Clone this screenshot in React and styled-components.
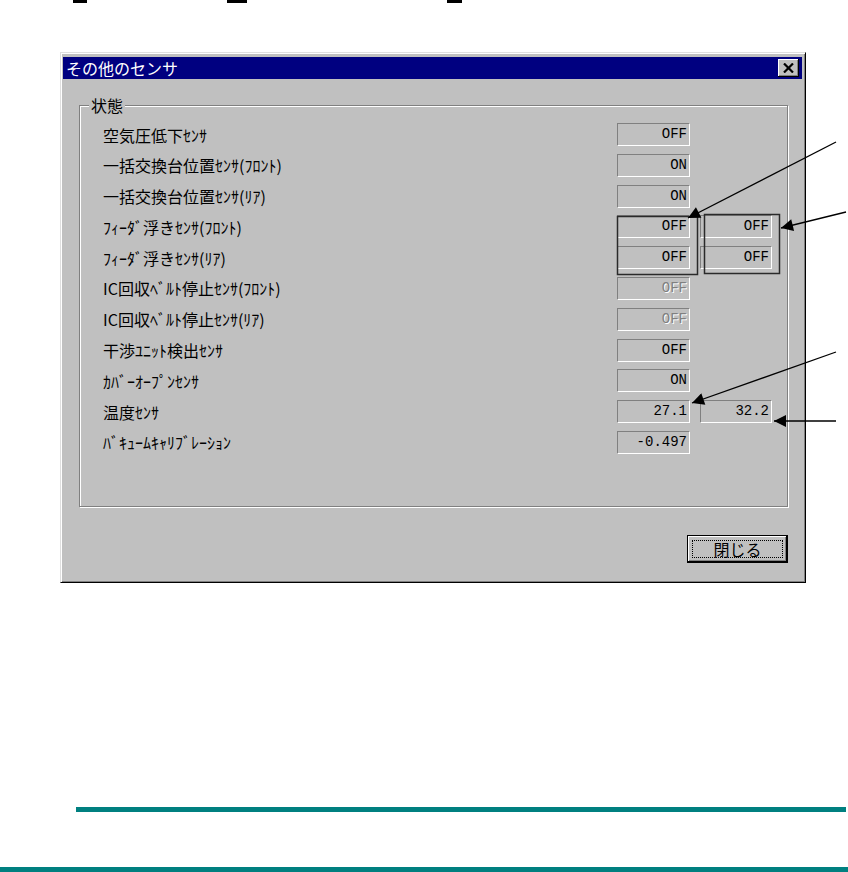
import React from "react";
import styled, { createGlobalStyle } from "styled-components";

const GlobalStyle = createGlobalStyle`
  html, body {
    margin: 0;
    padding: 0;
    background: #ffffff;
  }
  body {
    font-family: "Noto Sans CJK JP", "Noto Sans", sans-serif;
  }
`;

const Page = styled.div`
  position: relative;
  width: 848px;
  height: 872px;
  overflow: hidden;
  display: flex;
  flex-direction: column;
  background: #ffffff;
`;

const TopMarks = styled.div`
  display: flex;
  height: 3px;
`;

const Mark = styled.div`
  margin-left: ${(p) => p.$offset}px;
  width: ${(p) => p.$w}px;
  height: 3px;
  background: #000;
`;

const Dialog = styled.div`
  margin: 49px 0 0 60px;
  width: 746px;
  height: 531px;
  box-sizing: border-box;
  background: #c0c0c0;
  border: 1px solid;
  border-color: #dfdfdf #000000 #000000 #dfdfdf;
  box-shadow: inset 1px 1px 0 #ffffff, inset -1px -1px 0 #808080;
  padding: 4px 3px 0 2px;
  display: flex;
  flex-direction: column;
`;

const TitleBar = styled.div`
  height: 22px;
  background: #000080;
  color: #ffffff;
  display: flex;
  align-items: center;
  padding: 0 3px;
  font-size: 16px;
  line-height: 22px;
`;

const TitleText = styled.span`
  flex: 1;
  white-space: nowrap;
`;

const CloseBox = styled.div`
  width: 21px;
  height: 18px;
  box-sizing: border-box;
  background: #c0c0c0;
  display: flex;
  align-items: center;
  justify-content: center;
  box-shadow: inset -1px -1px 0 #000000, inset 1px 1px 0 #ffffff,
    inset -2px -2px 0 #808080;
`;

const Body = styled.div`
  flex: 1;
  display: flex;
  flex-direction: column;
  padding: 16px 14px 0 16px;
`;

const GroupBox = styled.fieldset`
  margin: 0;
  padding: 0;
  min-inline-size: 0;
  height: 412px;
  box-sizing: border-box;
  border: 1px solid #808080;
  box-shadow: inset 1px 1px 0 #ffffff, 1px 1px 0 #ffffff;
`;

const Legend = styled.legend`
  margin-left: 9px;
  padding: 0 2px;
  font-size: 16px;
  line-height: 20px;
  color: #000;
  background: #c0c0c0;
`;

const Rows = styled.div`
  display: flex;
  flex-direction: column;
  gap: 7.8px;
  padding: 8px 0 0 23px;
`;

const Row = styled.div`
  display: grid;
  grid-template-columns: 504px 73px 72px;
  column-gap: 10px;
  height: 23px;
  align-items: center;
`;

const Label = styled.div`
  font-size: 16px;
  line-height: 20px;
  color: #000;
  white-space: nowrap;
`;

const Field = styled.div`
  height: 23px;
  box-sizing: border-box;
  border: 1px solid;
  border-color: #808080 #ffffff #ffffff #808080;
  text-align: right;
  padding-right: 2px;
  font-family: "Liberation Mono", "DejaVu Sans Mono", monospace;
  font-size: 14px;
  line-height: 21px;
  color: ${(p) => (p.$disabled ? "#808080" : "#000000")};
  text-shadow: ${(p) => (p.$disabled ? "1px 1px 0 #ffffff" : "none")};
  white-space: nowrap;
`;

const ButtonRow = styled.div`
  display: flex;
  justify-content: flex-end;
  margin-top: 28px;
`;

const PushButton = styled.button`
  width: 101px;
  height: 28px;
  box-sizing: border-box;
  padding: 4px;
  margin: 0;
  border: 1px solid #000000;
  background: #c0c0c0;
  box-shadow: inset -1px -1px 0 #000000, inset 1px 1px 0 #ffffff,
    inset -2px -2px 0 #808080;
  display: flex;
  font-family: inherit;
`;

const FocusRing = styled.span`
  flex: 1;
  border: 1px dotted #000000;
  display: flex;
  align-items: center;
  justify-content: center;
  font-size: 16px;
  line-height: 16px;
  color: #000;
`;

const TealLine = styled.div`
  margin-top: ${(p) => p.$top}px;
  margin-left: ${(p) => p.$left}px;
  width: ${(p) => p.$w}px;
  height: 5px;
  background: #008080;
`;

const Annotations = styled.svg`
  position: absolute;
  left: 0;
  top: 0;
  width: 848px;
  height: 872px;
  pointer-events: none;
`;

const rows = [
  { label: "空気圧低下ｾﾝｻ", values: ["OFF"] },
  { label: "一括交換台位置ｾﾝｻ(ﾌﾛﾝﾄ)", values: ["ON"] },
  { label: "一括交換台位置ｾﾝｻ(ﾘｱ)", values: ["ON"] },
  { label: "ﾌｨｰﾀﾞ浮きｾﾝｻ(ﾌﾛﾝﾄ)", values: ["OFF", "OFF"] },
  { label: "ﾌｨｰﾀﾞ浮きｾﾝｻ(ﾘｱ)", values: ["OFF", "OFF"] },
  { label: "IC回収ﾍﾞﾙﾄ停止ｾﾝｻ(ﾌﾛﾝﾄ)", values: ["OFF"], disabled: true },
  { label: "IC回収ﾍﾞﾙﾄ停止ｾﾝｻ(ﾘｱ)", values: ["OFF"], disabled: true },
  { label: "干渉ﾕﾆｯﾄ検出ｾﾝｻ", values: ["OFF"] },
  { label: "ｶﾊﾞｰｵｰﾌﾟﾝｾﾝｻ", values: ["ON"] },
  { label: "温度ｾﾝｻ", values: ["27.1", "32.2"] },
  { label: "ﾊﾞｷｭｰﾑｷｬﾘﾌﾞﾚｰｼｮﾝ", values: ["-0.497"] },
];

const arrows = [
  [836, 142, 688, 218],
  [846, 212, 781, 228],
  [836, 352, 692, 403],
  [836, 421, 774, 421],
];

export default function App() {
  return (
    <>
      <GlobalStyle />
      <Page>
        <TopMarks>
          <Mark $offset={73} $w={14} />
          <Mark $offset={140} $w={20} />
          <Mark $offset={200} $w={15} />
        </TopMarks>

        <Dialog>
          <TitleBar>
            <TitleText>その他のセンサ</TitleText>
            <CloseBox>
              <svg width="11" height="10" viewBox="0 0 11 10">
                <path d="M1 0.5 L10 9.5 M10 0.5 L1 9.5" stroke="#000" strokeWidth="2.2" fill="none" />
              </svg>
            </CloseBox>
          </TitleBar>
          <Body>
            <GroupBox>
              <Legend>状態</Legend>
              <Rows>
                {rows.map((r) => (
                  <Row key={r.label}>
                    <Label>{r.label}</Label>
                    {r.values.map((v, i) => (
                      <Field key={i} $disabled={r.disabled}>
                        {v}
                      </Field>
                    ))}
                  </Row>
                ))}
              </Rows>
            </GroupBox>
            <ButtonRow>
              <PushButton type="button">
                <FocusRing>閉じる</FocusRing>
              </PushButton>
            </ButtonRow>
          </Body>
        </Dialog>

        <TealLine $top={224} $left={76} $w={770} />
        <TealLine $top={55} $left={0} $w={848} />

        <Annotations viewBox="0 0 848 872">
          <defs>
            <marker
              id="ah"
              viewBox="0 0 10 10"
              refX="10"
              refY="5"
              markerWidth="17"
              markerHeight="12"
              markerUnits="userSpaceOnUse"
              orient="auto"
            >
              <path d="M0 0 L10 5 L0 10 Z" fill="#000" />
            </marker>
          </defs>
          <rect x="617.5" y="216.5" width="80" height="58" fill="none" stroke="#2a2a2a" strokeWidth="1.5" />
          <rect x="704.5" y="214.5" width="75" height="59" fill="none" stroke="#2a2a2a" strokeWidth="1.5" />
          {arrows.map(([x1, y1, x2, y2], i) => (
            <line
              key={i}
              x1={x1}
              y1={y1}
              x2={x2}
              y2={y2}
              stroke="#000"
              strokeWidth="1.3"
              markerEnd="url(#ah)"
            />
          ))}
        </Annotations>
      </Page>
    </>
  );
}
